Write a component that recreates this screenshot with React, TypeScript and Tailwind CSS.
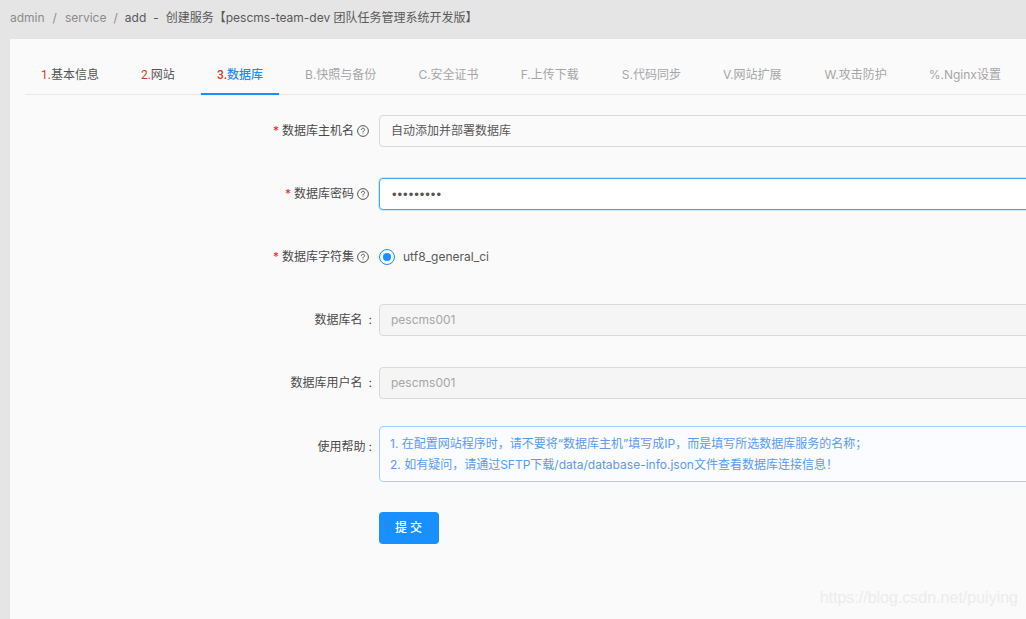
import { ReactNode } from 'react'

const font = { fontFamily: '"Inter", "Noto Sans CJK SC", sans-serif' }

const tabs = [
  { no: '1.', name: '基本信息', done: true, extra: '' },
  { no: '2.', name: '网站', done: true, extra: '' },
  { no: '3.', name: '数据库', done: true, active: true, extra: '' },
  { no: 'B.', name: '快照与备份', extra: '' },
  { no: 'C.', name: '安全证书', extra: '' },
  { no: 'F.', name: '上传下载', extra: '' },
  { no: 'S.', name: '代码同步', extra: 'ml-px' },
  { no: 'V.', name: '网站扩展', extra: '' },
  { no: 'W.', name: '攻击防护', extra: 'ml-px' },
  { no: '%.', name: 'Nginx设置', extra: '' },
]

function Help() {
  return (
    <svg viewBox="0 0 12 12" className="w-3 h-3 ml-[3px] shrink-0" fill="none" stroke="#444" strokeWidth="0.9">
      <circle cx="6" cy="6" r="5.4" />
      <path d="M4.4 4.7c0-.9.7-1.5 1.6-1.5s1.6.6 1.6 1.4c0 .7-.4 1-.9 1.3-.5.3-.7.6-.7 1.2" strokeLinecap="round" />
      <circle cx="6" cy="8.7" r="0.45" fill="#444" stroke="none" />
    </svg>
  )
}

function Row({ label, required, help, mb, children }: { label: string; required?: boolean; help?: boolean; mb: string; children: ReactNode }) {
  return (
    <div className={`flex items-center ${mb}`}>
      <div className={`w-[369px] shrink-0 flex items-center justify-end text-xs text-[#4a4a4a] ${help ? 'pr-[10px]' : 'pr-[7px]'}`}>
        {required && <span className="text-[#f5222d] mr-[3px] text-xs">*</span>}
        <span>{label}</span>
        {help ? <Help /> : <span className="ml-[6px]">:</span>}
      </div>
      {children}
    </div>
  )
}

export default function App() {
  return (
    <div className="w-[1026px] h-[619px] overflow-hidden bg-[#e5e5e5] flex flex-col" style={font}>
      <div className="h-[39px] shrink-0 flex items-center pl-[10px] pb-[3px] text-xs text-[#8c8c8c] whitespace-pre">
        <span>admin</span>
        <span className="mx-2">/</span>
        <span>service</span>
        <span className="mx-[7px]">/</span>
        <span className="text-[#595959]">add</span>
        <span className="text-[#595959] mx-[7px]">-</span>
        <span className="text-[#595959]">创建服务【pescms-team-dev 团队任务管理系统开发版】</span>
      </div>
      <div className="flex-1 ml-[10px] bg-[#fafafa] relative">
        <div className="ml-[15px] h-[56px] flex border-b border-[#e8e8e8]">
          {tabs.map((t) => (
            <div
              key={t.no}
              className={`px-4 mr-[10px] pt-[28px] text-xs whitespace-nowrap h-[56px] ${t.extra} ${t.active ? 'border-b-2 border-[#1890ff] text-[#1890ff] font-medium' : t.done ? 'text-[#555]' : 'text-[#a6a6a6]'}`}
            >
              <span className={t.done ? 'text-[#d9391c] font-["Roboto"]' : ''}>{t.no}</span>
              {t.name}
            </div>
          ))}
        </div>
        <div className="pt-[20px]">
          <Row label="数据库主机名" required help mb="mb-[31px]">
            <div className="w-[800px] h-[32px] shrink-0 px-[11px] flex items-center text-xs text-[#595959] bg-[#fafafa] border border-[#d9d9d9] rounded">自动添加并部署数据库</div>
          </Row>
          <Row label="数据库密码" required help mb="mb-[31px]">
            <div className="w-[800px] h-[32px] shrink-0 px-3 pt-px flex items-center text-[13px] tracking-[1px] font-['Liberation_Sans'] text-[#555] bg-white border border-[#40a9ff] rounded shadow-[0_0_0_1px_rgba(24,144,255,0.2)]">•••••••••</div>
          </Row>
          <Row label="数据库字符集" required help mb="mb-[31px]">
            <div className="h-[32px] flex items-center">
              <span className="w-4 h-4 rounded-full border border-[#1890ff] flex items-center justify-center">
                <span className="w-2 h-2 rounded-full bg-[#1890ff]" />
              </span>
              <span className="ml-2 text-xs text-[#595959]">utf8_general_ci</span>
            </div>
          </Row>
          <Row label="数据库名" mb="mb-[31px]">
            <div className="w-[800px] h-[32px] shrink-0 px-[11px] flex items-center text-xs text-[#a6a6a6] bg-[#f5f5f5] border border-[#d9d9d9] rounded">pescms001</div>
          </Row>
          <Row label="数据库用户名" mb="mb-[27px]">
            <div className="w-[800px] h-[32px] shrink-0 px-[11px] flex items-center text-xs text-[#a6a6a6] bg-[#f5f5f5] border border-[#d9d9d9] rounded">pescms001</div>
          </Row>
          <div className="flex items-start mb-[30px]">
            <div className="w-[369px] shrink-0 h-[40px] flex items-center justify-end pr-[7px] pt-px text-xs text-[#4a4a4a]">
              <span>使用帮助</span>
              <span className="ml-[3px]">:</span>
            </div>
            <div className="w-[800px] h-[56px] shrink-0 px-[10px] pt-[6px] text-xs leading-[21px] text-[#5b9bf0] bg-[#fafcff] border border-[#a9cdf5] rounded">
              <p>1. 在配置网站程序时，请不要将“数据库主机”填写成IP，而是填写所选数据库服务的名称；</p>
              <p>2. 如有疑问，请通过SFTP下载/data/database-info.json文件查看数据库连接信息！</p>
            </div>
          </div>
          <div className="pl-[369px]">
            <button className="w-[60px] h-[32px] bg-[#1890ff] text-white text-xs font-medium rounded tracking-[3px] pl-[2px]">提交</button>
          </div>
        </div>
        <div className="absolute right-[8px] bottom-[9px] text-base text-[#ececec]" style={{ fontFamily: '"Liberation Sans", sans-serif' }}>https://blog.csdn.net/puiying</div>
      </div>
    </div>
  )
}
